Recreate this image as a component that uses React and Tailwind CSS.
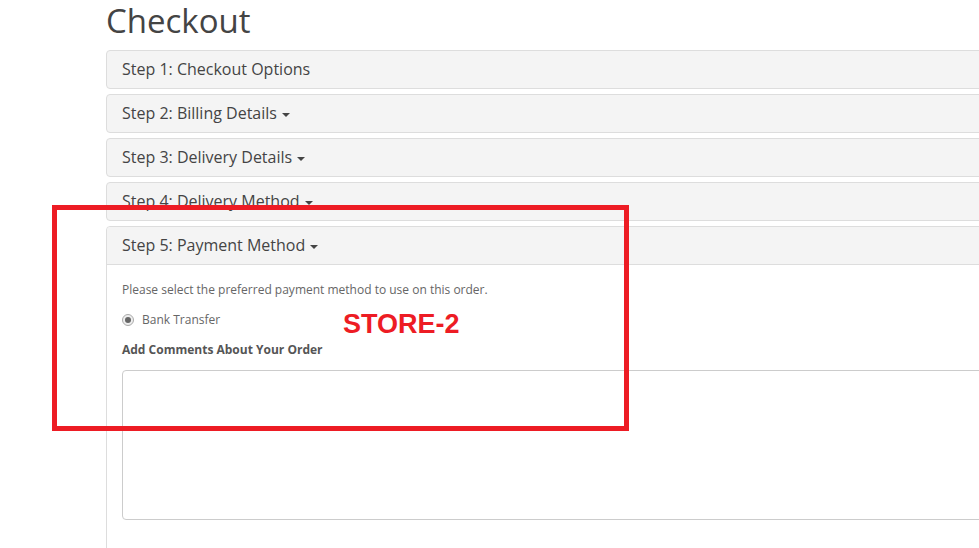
import React from 'react';

const steps = [
  { label: 'Step 1: Checkout Options', caret: false },
  { label: 'Step 2: Billing Details', caret: true },
  { label: 'Step 3: Delivery Details', caret: true },
  { label: 'Step 4: Delivery Method', caret: true },
];

function Caret() {
  return (
    <span className="ml-[5px] inline-block h-0 w-0 border-x-[4px] border-t-[4px] border-x-transparent border-t-[#444] align-middle" />
  );
}

function PanelHeading({ label, caret }) {
  return (
    <div className="border-b border-[#ddd] bg-[#f4f4f4] px-[15px] py-[10px] rounded-t-[4px]">
      <h4 className="text-[16px] leading-[17px] text-[#444]">
        {label}
        {caret ? <Caret /> : null}
      </h4>
    </div>
  );
}

export default function App() {
  return (
    <div className="relative h-[548px] w-[979px] overflow-hidden bg-white" style={{ fontFamily: '"Open Sans", sans-serif' }}>
      <div className="ml-[106px] w-[1000px]">
        <h1 className="pt-[3px] pb-[11px] text-[33px] leading-[36px] text-[#444]">Checkout</h1>

        <div className="flex flex-col gap-[5px]">
          {steps.map((s) => (
            <div key={s.label} className="rounded-[4px] border border-[#ddd] bg-[#f4f4f4] px-[15px] py-[10px]">
              <h4 className="text-[16px] leading-[17px] text-[#444]">
                {s.label}
                {s.caret ? <Caret /> : null}
              </h4>
            </div>
          ))}

          <div className="h-[400px] rounded-t-[4px] border border-[#ddd] bg-white">
            <PanelHeading label="Step 5: Payment Method" caret />
            <div className="p-[15px] text-[12px] leading-[20px] text-[#666]">
              <p className="mb-[10px]">Please select the preferred payment method to use on this order.</p>
              <div className="mb-[10px] flex items-center">
                <span className="mr-[8px] flex h-[12px] w-[12px] items-center justify-center rounded-full border border-[#aaa] bg-[#eee]">
                  <span className="h-[6px] w-[6px] rounded-full bg-[#666]" />
                </span>
                <span>Bank Transfer</span>
              </div>
              <p className="mb-[10px] font-bold text-[#555]">Add Comments About Your Order</p>
              <div className="h-[150px] w-[900px] rounded-[4px] border border-[#ccc] bg-white" />
            </div>
          </div>
        </div>
      </div>

      <div className="absolute left-[52px] top-[205px] h-[226px] w-[577px] border-[5px] border-[#ed1c24]" />
      <div
        className="absolute left-[343px] top-[311px] text-[27px] font-bold leading-none text-[#ed1c24]"
        style={{ fontFamily: '"Liberation Sans", Arial, sans-serif' }}
      >
        STORE-2
      </div>
    </div>
  );
}
